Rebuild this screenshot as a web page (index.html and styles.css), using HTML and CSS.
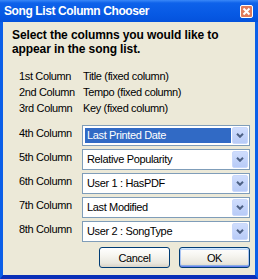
FILE: index.html
```html
<!DOCTYPE html>
<html>
<head>
<meta charset="utf-8">
<link rel="stylesheet" href="styles.css">
</head>
<body>
<div class="win">
  <div class="titlebar">
    <span class="title">Song List Column Chooser</span>
    <span class="close"><svg width="11" height="11" viewBox="0 0 11 11"><path d="M2.5 2.5 L8.5 8.5 M8.5 2.5 L2.5 8.5" stroke="#fff" stroke-width="2" fill="none"/></svg></span>
  </div>
  <div class="body">
    <p class="intro">Select the columns you would like to appear in the song list.</p>
    <div class="grid fixed">
      <span class="lbl">1st Column</span><span class="fval">Title (fixed column)</span>
      <span class="lbl">2nd Column</span><span class="fval">Tempo (fixed column)</span>
      <span class="lbl">3rd Column</span><span class="fval">Key (fixed column)</span>
    </div>
    <div class="grid combos">
      <span class="lbl">4th Column</span>
      <div class="combo"><span class="val sel">Last Printed Date</span><span class="dd"><svg width="8" height="5" viewBox="0 0 8 5"><path d="M1 0.8 L4 3.8 L7 0.8" stroke="#4D6185" stroke-width="2" fill="none"/></svg></span></div>
      <span class="lbl">5th Column</span>
      <div class="combo"><span class="val">Relative Popularity</span><span class="dd"><svg width="8" height="5" viewBox="0 0 8 5"><path d="M1 0.8 L4 3.8 L7 0.8" stroke="#4D6185" stroke-width="2" fill="none"/></svg></span></div>
      <span class="lbl">6th Column</span>
      <div class="combo"><span class="val">User 1 : HasPDF</span><span class="dd"><svg width="8" height="5" viewBox="0 0 8 5"><path d="M1 0.8 L4 3.8 L7 0.8" stroke="#4D6185" stroke-width="2" fill="none"/></svg></span></div>
      <span class="lbl">7th Column</span>
      <div class="combo"><span class="val">Last Modified</span><span class="dd"><svg width="8" height="5" viewBox="0 0 8 5"><path d="M1 0.8 L4 3.8 L7 0.8" stroke="#4D6185" stroke-width="2" fill="none"/></svg></span></div>
      <span class="lbl">8th Column</span>
      <div class="combo"><span class="val">User 2 : SongType</span><span class="dd"><svg width="8" height="5" viewBox="0 0 8 5"><path d="M1 0.8 L4 3.8 L7 0.8" stroke="#4D6185" stroke-width="2" fill="none"/></svg></span></div>
    </div>
    <div class="buttons">
      <button class="btn">Cancel</button>
      <button class="btn default">OK</button>
    </div>
  </div>
</div>
</body>
</html>
```

FILE: styles.css
```css
* { box-sizing: border-box; }
body {
  margin: 0;
  font-family: "Liberation Sans", Arial, sans-serif;
  font-size: 11px;
  color: #000;
}
.win {
  width: 258px;
  height: 279px;
  display: flex;
  flex-direction: column;
  background: #0A5CE6;
}
.titlebar {
  height: 22px;
  flex: none;
  display: flex;
  align-items: center;
  justify-content: space-between;
  padding: 0 5px 0 4px;
  background: linear-gradient(#3A88F8 0, #0E62EA 3px, #0759E4 14px, #0452DC 100%);
}
.title {
  color: #fff;
  font-weight: bold;
  font-size: 12px;
  letter-spacing: -0.4px;
}
.close {
  width: 13px;
  height: 13px;
  border: 1px solid #fff;
  border-radius: 2px;
  background: #E07A5B;
  display: flex;
  align-items: center;
  justify-content: center;
}
.body {
  flex: 1;
  background: #ECE9D8;
  border-left: 3px solid #0B5FE8;
  border-right: 3px solid #0B5FE8;
  border-bottom: 4px solid #0A2FB8;
  padding: 6px 5px 0 0;
}
.intro {
  margin: 0 0 12px;
  padding-left: 9px;
  font-weight: bold;
  font-size: 12px;
  line-height: 14px;
  letter-spacing: -0.1px;
}
.grid {
  display: grid;
  grid-template-columns: 63px 168px;
  padding-left: 16px;
  letter-spacing: -0.35px;
}
.fixed {
  line-height: 16px;
}
.fval { padding-left: 1px; }
.combos {
  margin-top: 9px;
  row-gap: 3px;
}
.combos .lbl { line-height: 16px; }
.combo {
  height: 21px;
  border: 1px solid #7F9DB9;
  background: #fff;
  display: flex;
  padding: 1px;
}
.val {
  flex: 1;
  margin: 1px 1px 1px 1px;
  padding-left: 2px;
  line-height: 15px;
  white-space: nowrap;
}
.val.sel {
  background: #316AC5;
  color: #fff;
}
.dd {
  width: 16px;
  height: 17px;
  border: 1px solid #C9D8FB;
  border-radius: 2px;
  background: linear-gradient(#CFDDFD, #B8CBF7);
  display: flex;
  align-items: center;
  justify-content: center;
}
.buttons {
  display: flex;
  justify-content: flex-end;
  gap: 9px;
  margin-top: 5px;
}
.btn {
  width: 71px;
  height: 21px;
  padding: 0;
  border: 1px solid #003C74;
  border-radius: 3px;
  background: linear-gradient(#FFFFFF, #F6F5F0 40%, #E9E7DE 80%, #D8D2C6);
  font-family: "Liberation Sans", Arial, sans-serif;
  font-size: 11px;
  letter-spacing: -0.35px;
  color: #000;
}
.btn.default {
  box-shadow: inset 0 1px 0 #CEE7FF, inset 0 -1px 0 #6982EE, inset 1px 0 0 #A9C4F2, inset -1px 0 0 #A9C4F2,
              inset 0 2px 0 #BCD4F6, inset 0 -2px 0 #89ADE4;
}
```
